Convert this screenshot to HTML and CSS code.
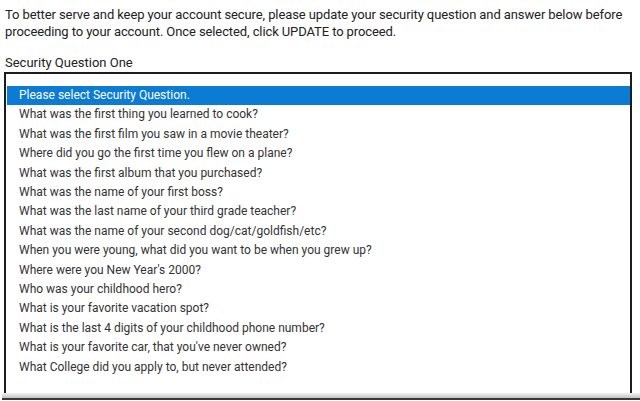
FILE: index.html
```html
<!DOCTYPE html>
<html lang="en">
<head>
  <meta charset="UTF-8" />
  <title>Update Security Question</title>
  <link rel="stylesheet" href="styles.css">
</head>
<body>
  <div class="container">
    <p class="intro">To better serve and keep your account secure, please update your security question and answer below before proceeding to your account. Once selected, click UPDATE to proceed.</p>

    <div class="field-label">Security Question One</div>
    <div class="question-list">
      <div class="option selected">Please select Security Question.</div>
      <div class="option">What was the first thing you learned to cook?</div>
      <div class="option">What was the first film you saw in a movie theater?</div>
      <div class="option">Where did you go the first time you flew on a plane?</div>
      <div class="option">What was the first album that you purchased?</div>
      <div class="option">What was the name of your first boss?</div>
      <div class="option">What was the last name of your third grade teacher?</div>
      <div class="option">What was the name of your second dog/cat/goldfish/etc?</div>
      <div class="option">When you were young, what did you want to be when you grew up?</div>
      <div class="option">Where were you New Year's 2000?</div>
      <div class="option">Who was your childhood hero?</div>
      <div class="option">What is your favorite vacation spot?</div>
      <div class="option">What is the last 4 digits of your childhood phone number?</div>
      <div class="option">What is your favorite car, that you've never owned?</div>
      <div class="option">What College did you apply to, but never attended?</div>
    </div>
  </div>
  <div class="list-edge"></div>
</body>
</html>
```

FILE: styles.css
```css
body {
  font-family: Roboto, "Liberation Sans", sans-serif;
  margin: 0;
  padding: 0;
  color: #222;
  background: #fff;
}

.container {
  padding: 6px 3px 0 5px;
}

.intro {
  margin: 0;
  font-size: 13px;
  line-height: 17px;
  letter-spacing: -0.1px;
}

.field-label {
  margin-top: 14px;
  font-size: 13px;
  line-height: 17px;
}

.question-list {
  margin: 1px 5px 0 -1px;
  border: 2px solid #1c1c1c;
  border-bottom: none;
  padding: 12px 0 16px 1px;
}

.option {
  font-size: 12px;
  line-height: 19.4px;
  padding-left: 12px;
  color: #333;
  white-space: nowrap;
}

.option.selected {
  background-color: #0b7bd3;
  color: #fff;
}

/* greyed bottom edge under the list */
.list-edge {
  height: 5px;
  margin: 0 0 0 2px;
  background: linear-gradient(#f2f2f2, #c4c4c4);
  border-bottom: 2px solid #3a3a3a;
}
```
